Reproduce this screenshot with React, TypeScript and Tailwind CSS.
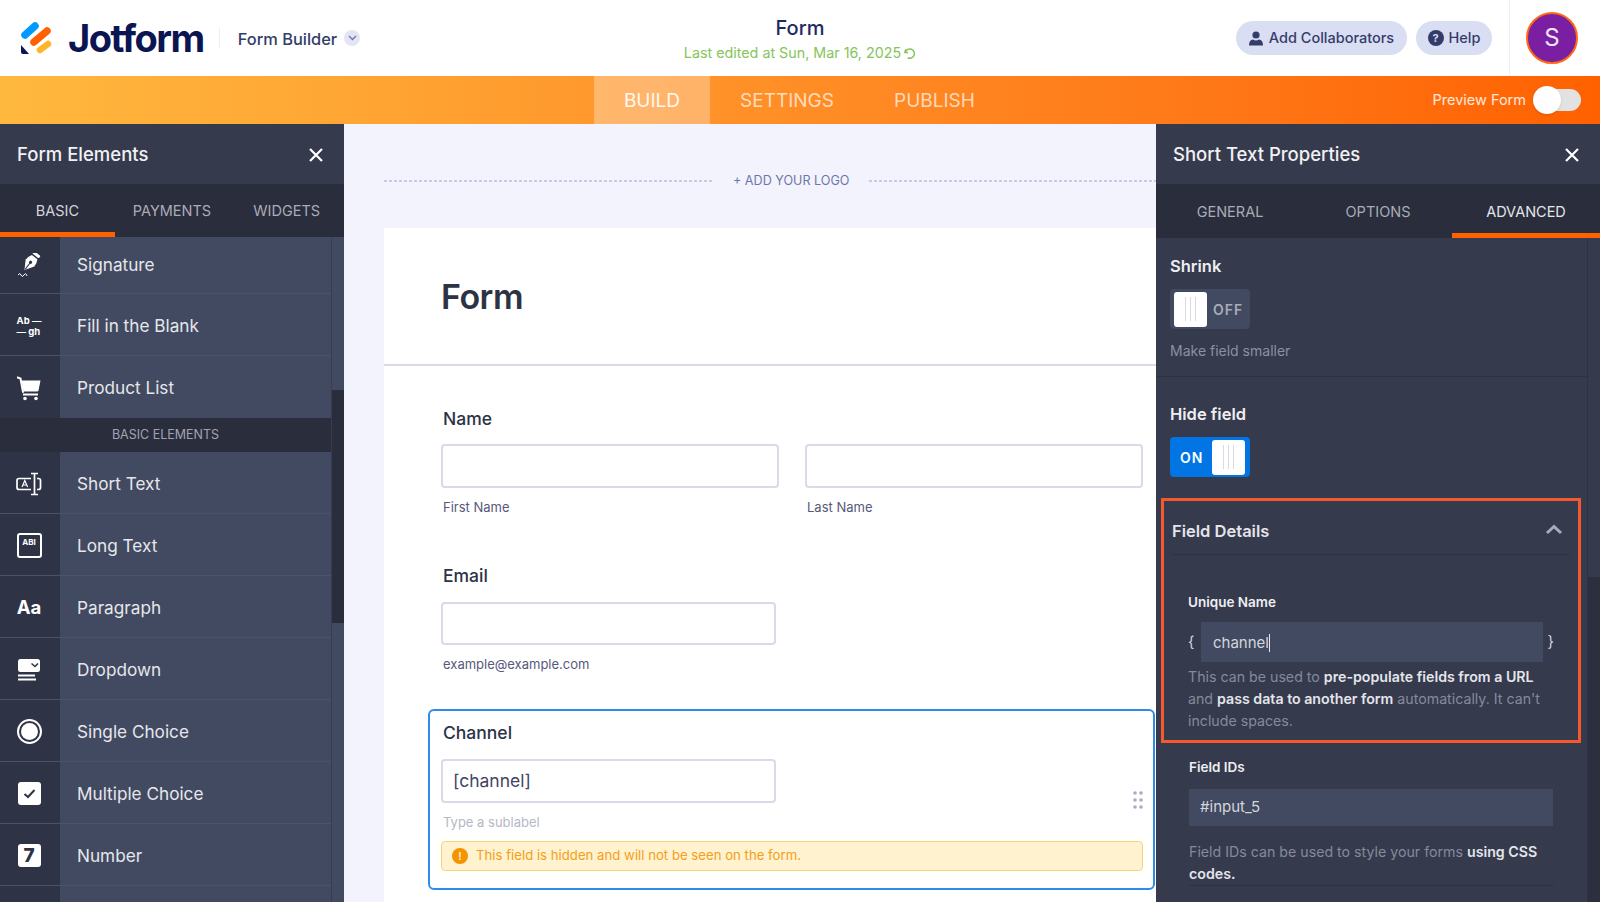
import type { ReactNode } from "react";

const CartIcon = () => (
  <svg width="24" height="25" viewBox="0 0 24 25" fill="none">
    <path d="M0.5 1.5 L3.5 2.5 L6 16" stroke="#fff" strokeWidth="2" strokeLinecap="round" />
    <path d="M4.5 4.5 H23.5 L21.5 14.5 Q21.3 15.5 20 15.5 H6.5 Z" fill="#fff" />
    <path d="M6 18.5 H21" stroke="#fff" strokeWidth="2" />
    <circle cx="8" cy="22.5" r="1.8" fill="#fff" />
    <circle cx="19" cy="22.5" r="1.8" fill="#fff" />
  </svg>
);

const PenIcon = () => (
  <svg width="24" height="24" viewBox="0 0 24 24" fill="none">
    <g transform="rotate(38 13 10)">
      <rect x="9" y="-2" width="8" height="3" rx="0.8" fill="#fff" />
      <path d="M13 19 L7.5 10 Q7.5 5.5 9.5 2.5 H16.5 Q18.5 5.5 18.5 10 Z" fill="#fff" />
      <path d="M13 18 V10" stroke="#2f3346" strokeWidth="1.1" />
      <circle cx="13" cy="9" r="1.6" fill="#2f3346" />
    </g>
    <path d="M1 22 Q3 19 4 22 T7 22 T10 23" stroke="#fff" strokeWidth="1" />
  </svg>
);

const ShortTextIcon = () => (
  <svg width="26" height="24" viewBox="0 0 26 24" fill="none">
    <path d="M15 6.5 H3 Q1 6.5 1 8.5 V15.5 Q1 17.5 3 17.5 H15" stroke="#fff" strokeWidth="1.7" />
    <path d="M21 6.5 H22.5 Q24.5 6.5 24.5 8.5 V15.5 Q24.5 17.5 22.5 17.5 H21" stroke="#fff" strokeWidth="1.7" />
    <path d="M15 1.5 H22 M18.5 1.5 V22.5 M15 22.5 H22" stroke="#fff" strokeWidth="1.7" />
    <path d="M6 15 L8.8 8.5 L11.6 15 M7 13 H10.6" stroke="#fff" strokeWidth="1.2" />
  </svg>
);

const DropdownIcon = () => (
  <svg width="24" height="24" viewBox="0 0 24 24" fill="none">
    <rect x="1" y="1" width="22" height="13" rx="2.5" fill="#fff" />
    <path d="M14.5 5.5 L18 8.5 L21 5.5" stroke="#2f3346" strokeWidth="1.6" />
    <path d="M1 17.5 H18 M1 21.5 H19" stroke="#fff" strokeWidth="2" />
  </svg>
);

const CheckIcon = () => (
  <span className="flex h-[23px] w-[23px] items-center justify-center rounded-[3px] bg-white">
    <svg width="13" height="11" viewBox="0 0 13 11" fill="none">
      <path d="M1.5 6 L5 9 L11.5 2" stroke="#2f3346" strokeWidth="2" />
    </svg>
  </span>
);

type Item = { label: string; icon: ReactNode };

const topItems: Item[] = [
  { label: "Signature", icon: <PenIcon /> },
  {
    label: "Fill in the Blank",
    icon: (
      <span className="flex flex-col text-[9.5px] leading-[11px] font-bold text-white">
        <span>Ab —</span>
        <span>— gh</span>
      </span>
    ),
  },
  { label: "Product List", icon: <CartIcon /> },
];

const basicItems: Item[] = [
  { label: "Short Text", icon: <ShortTextIcon /> },
  {
    label: "Long Text",
    icon: (
      <span className="flex h-[25px] w-[25px] items-start justify-center rounded-[3px] border-2 border-white pt-[3px] text-[8px] leading-[9px] font-bold text-white">
        ABI
      </span>
    ),
  },
  { label: "Paragraph", icon: <span className="text-[18.5px] leading-none font-bold text-white">Aa</span> },
  { label: "Dropdown", icon: <DropdownIcon /> },
  {
    label: "Single Choice",
    icon: (
      <span className="flex h-[25px] w-[25px] items-center justify-center rounded-full border-2 border-white">
        <span className="h-[17px] w-[17px] rounded-full bg-white" />
      </span>
    ),
  },
  { label: "Multiple Choice", icon: <CheckIcon /> },
  {
    label: "Number",
    icon: (
      <span className="flex h-[23px] w-[23px] items-center justify-center rounded-[3px] bg-white text-[19px] leading-none font-extrabold text-[#2f3346]">
        7
      </span>
    ),
  },
  { label: "", icon: null },
];

function ElementRow({ item, h, pad = "pt-[2px]", line = true }: { item: Item; h: string; pad?: string; line?: boolean }) {
  return (
    <div className={`flex ${h} shrink-0 ${line ? "border-b border-[#4a5270]" : ""}`}>
      <div className={`flex w-[60px] items-center justify-center bg-[#2f3346] pr-[2px] ${pad}`}>{item.icon}</div>
      <div className={`flex flex-1 items-center bg-[#414a60] pl-[17px] text-[17.2px] text-[#e6e7ec] ${pad}`}>{item.label}</div>
    </div>
  );
}

const Close = () => (
  <svg width="16" height="16" viewBox="0 0 16 16" fill="none">
    <path d="M2 2 L14 14 M14 2 L2 14" stroke="#fff" strokeWidth="2.2" />
  </svg>
);

const Knob = () => (
  <span className="flex h-[35px] w-[33px] items-center justify-center gap-[4px] rounded-[3px] bg-white">
    <span className="h-[24px] w-px bg-[#d9dae2]" />
    <span className="h-[24px] w-px bg-[#d9dae2]" />
    <span className="h-[24px] w-px bg-[#d9dae2]" />
  </span>
);

function Logo() {
  return (
    <svg width="34" height="36" viewBox="0 0 34 36" fill="none">
      <path d="M6 15 L16 6" stroke="#0099ff" strokeWidth="7.5" strokeLinecap="round" />
      <path d="M15 22 L28 11" stroke="#ff6100" strokeWidth="7.5" strokeLinecap="round" />
      <path d="M21 30 L29 24" stroke="#ffb629" strokeWidth="6.5" strokeLinecap="round" />
      <path d="M2 25 L10 34 H4 Q2 34 2 32 Z" fill="#0a1551" />
    </svg>
  );
}

export default function App() {
  return (
    <div className="flex h-[902px] w-[1600px] flex-col overflow-hidden bg-white font-['Inter',sans-serif]">
      {/* Top bar */}
      <header className="flex h-[76px] shrink-0 items-center">
        <div className="flex w-[600px] items-center pl-[19px]">
          <Logo />
          <span className="ml-[15px] text-[38px] leading-none font-bold tracking-[-1.5px] text-[#0a1551]">Jotform</span>
          <span className="ml-[15px] h-[20px] w-px bg-[#eceef6]" />
          <span className="ml-[18px] pt-[2px] text-[16.4px] font-medium text-[#343c6a]">Form Builder</span>
          <span className="ml-[7px] flex h-[16px] w-[16px] items-center justify-center rounded-full bg-[#e3e5f5]">
            <svg width="9" height="6" viewBox="0 0 9 6" fill="none">
              <path d="M1 1 L4.5 4.5 L8 1" stroke="#6f76a7" strokeWidth="1.4" />
            </svg>
          </span>
        </div>
        <div className="flex w-[400px] flex-col items-center pt-[1px]">
          <span className="text-[20px] leading-[28px] font-medium text-[#1e2a63]">Form</span>
          <span className="mt-[1px] flex items-center gap-[2px] text-[14.3px] leading-[20px] text-[#86c45a]">
            Last edited at Sun, Mar 16, 2025
            <svg width="13" height="13" viewBox="0 0 14 14" fill="none">
              <path d="M3 2.5 L2 6 L5.5 5.8 M2.5 5.5 A5 5 0 1 1 5 11.6" stroke="#86c45a" strokeWidth="1.6" />
            </svg>
          </span>
        </div>
        <div className="flex flex-1 items-center justify-end">
          <button className="flex h-[34px] w-[171px] items-center justify-center gap-[6px] rounded-full bg-[#dadef3] text-[14.5px] font-medium text-[#343c6a]">
            <svg width="14" height="15" viewBox="0 0 14 15" fill="#343c6a">
              <circle cx="7" cy="4" r="3.6" />
              <path d="M0 14.5 Q0 9 4 8.5 Q7 10.5 10 8.5 Q14 9 14 14.5 Z" />
            </svg>
            Add Collaborators
          </button>
          <button className="ml-[9px] flex h-[34px] w-[76px] items-center justify-center gap-[5px] rounded-full bg-[#dadef3] text-[14.5px] font-medium text-[#343c6a]">
            <span className="flex h-[16px] w-[16px] items-center justify-center rounded-full bg-[#343c6a] text-[11px] leading-none font-bold text-[#dadef3]">?</span>
            Help
          </button>
          <span className="ml-[17px] h-[76px] w-px bg-[#eceef3]" />
          <div className="mr-[22px] ml-[16px] flex h-[52px] w-[52px] items-center justify-center rounded-full border-2 border-[#ff6a14] bg-[#7a1fa2] text-[24px] text-[#f3e6f8]">S</div>
        </div>
      </header>

      {/* Build / settings / publish bar */}
      <nav className="flex h-[48px] shrink-0 items-stretch bg-linear-to-r from-[#ffb83e] via-[#ff8d26] via-50% to-[#ff6100] pl-[594px] text-[19px] text-white/70">
        <span className="flex w-[116px] items-center justify-center bg-white/30 pt-[2px] text-white/90">BUILD</span>
        <span className="flex w-[154px] items-center justify-center pt-[2px]">SETTINGS</span>
        <span className="flex w-[141px] items-center justify-center pt-[2px]">PUBLISH</span>
        <div className="ml-auto flex items-center pr-[19px]">
          <span className="text-[14.5px] text-white/85">Preview Form</span>
          <div className="relative ml-[9px] h-[22px] w-[46px] rounded-full bg-[#e2e2e2]">
            <span className="absolute top-[-3px] left-[-2px] h-[28px] w-[28px] rounded-full bg-white shadow" />
          </div>
        </div>
      </nav>

      <main className="flex min-h-0 flex-1">
        {/* Form elements panel */}
        <aside className="flex w-[344px] shrink-0 flex-col overflow-hidden bg-[#353a4d]">
          <div className="flex h-[60px] shrink-0 items-center justify-between pt-[1px] pr-[20px] pl-[17px] text-[18.5px] font-medium text-[#f1f1f4]">
            Form Elements
            <Close />
          </div>
          <div className="grid h-[53px] shrink-0 grid-cols-3 bg-[#2a2d3c] text-[14.5px] text-[#a9acb8]">
            <span className="flex items-center justify-center border-b-[5px] border-[#ff6100] pt-[5px] text-[#d5d6dc]">BASIC</span>
            <span className="flex items-center justify-center">PAYMENTS</span>
            <span className="flex items-center justify-center">WIDGETS</span>
          </div>
          <div className="flex min-h-0 flex-1">
            <div className="flex w-[331px] flex-col">
              <ElementRow item={topItems[0]} h="h-[57px]" pad="" />
              <ElementRow item={topItems[1]} h="h-[62px]" />
              <ElementRow item={topItems[2]} h="h-[62px]" line={false} />
              <div className="flex h-[34px] shrink-0 items-center justify-center bg-[#2a2d3c] pt-[1px] text-[12.5px] text-[#a0a4b2]">BASIC ELEMENTS</div>
              {basicItems.map((item, i) => (
                <ElementRow key={i} item={item} h="h-[62px]" />
              ))}
            </div>
            <div className="flex w-[13px] flex-col border-l border-[#373c50] bg-[#414a60]">
              <div className="h-[153px] shrink-0" />
              <div className="h-[233px] shrink-0 bg-[#2a2d3c]" />
            </div>
          </div>
        </aside>

        {/* Canvas */}
        <section className="w-[812px] shrink-0 overflow-hidden bg-[#f3f3fe] pl-[40px]">
          <div className="flex h-[104px] items-center pt-[10px]">
            <span className="h-[2px] w-[330px] bg-[repeating-linear-gradient(90deg,#c8cbe8_0_3px,transparent_3px_5px)]" />
            <span className="ml-[19px] w-[117px] text-[12.6px] whitespace-nowrap text-[#6f76a7]">+ ADD YOUR LOGO</span>
            <span className="ml-[19px] h-[2px] flex-1 bg-[repeating-linear-gradient(90deg,#c8cbe8_0_3px,transparent_3px_5px)]" />
          </div>
          <div className="h-[700px] bg-white text-[#2c3345]">
            <div className="flex h-[138px] items-center border-b-2 border-[#d8dae5] pl-[57px] text-[34px] font-semibold tracking-[-0.5px]">Form</div>
            <div className="pt-[41px] pl-[44px]">
              <div className="pl-[13px]">
                <div className="pl-[2px] text-[17.5px] leading-[24px] font-medium">Name</div>
                <div className="mt-[13px] flex gap-[26px]">
                  <div className="w-[338px]">
                    <div className="h-[44px] rounded-[4px] border-2 border-[#d8dae9] bg-white" />
                    <div className="mt-[10px] pl-[2px] text-[13px] leading-[18px] text-[#57597a]">First Name</div>
                  </div>
                  <div className="w-[338px]">
                    <div className="h-[44px] rounded-[4px] border-2 border-[#d8dae9] bg-white" />
                    <div className="mt-[10px] pl-[2px] text-[13px] leading-[18px] text-[#57597a]">Last Name</div>
                  </div>
                </div>
                <div className="mt-[48px] pl-[2px] text-[17.5px] leading-[24px] font-medium">Email</div>
                <div className="mt-[14px] h-[43px] w-[335px] rounded-[4px] border-2 border-[#d8dae9] bg-white" />
                <div className="mt-[10px] pl-[2px] text-[13px] leading-[18px] text-[#57597a]">example@example.com</div>
              </div>
              <div className="relative mt-[36px] h-[181px] w-[727px] rounded-[6px] border-2 border-[#2f8be6] pt-[10px] pl-[11px]">
                <div className="pl-[2px] text-[17.5px] leading-[24px] font-medium">Channel</div>
                <div className="mt-[14px] flex h-[44px] w-[335px] items-center rounded-[4px] border-2 border-[#d8dae9] pl-[10px] text-[17.5px] text-[#3f4563]">[channel]</div>
                <div className="mt-[10px] pl-[2px] text-[13px] leading-[18px] text-[#b5b8c6]">Type a sublabel</div>
                <div className="mt-[10px] flex h-[30px] w-[702px] items-center gap-[8px] rounded-[4px] border border-[#f0d878] bg-[#fef2cf] pl-[10px] text-[13.2px] text-[#f59e1b]">
                  <span className="flex h-[16px] w-[16px] items-center justify-center rounded-full bg-[#f59300] text-[10px] leading-none font-bold text-[#fef2cf]">!</span>
                  This field is hidden and will not be seen on the form.
                </div>
                {/* drag handle */}
                <svg className="absolute top-[80px] right-[10px]" width="10" height="18" viewBox="0 0 10 18" fill="#a7abc4">
                  <circle cx="2" cy="2" r="1.8" />
                  <circle cx="8" cy="2" r="1.8" />
                  <circle cx="2" cy="9" r="1.8" />
                  <circle cx="8" cy="9" r="1.8" />
                  <circle cx="2" cy="16" r="1.8" />
                  <circle cx="8" cy="16" r="1.8" />
                </svg>
              </div>
            </div>
          </div>
        </section>

        {/* Properties panel */}
        <aside className="flex flex-1 flex-col overflow-hidden bg-[#353a4d]">
          <div className="flex h-[60px] shrink-0 items-center justify-between pt-[1px] pr-[20px] pl-[17px] text-[18.5px] font-medium text-[#f1f1f4]">
            Short Text Properties
            <Close />
          </div>
          <div className="grid h-[54px] shrink-0 grid-cols-3 bg-[#2a2d3c] pt-[2px] text-[14.5px] text-[#a9acb8]">
            <span className="flex items-center justify-center">GENERAL</span>
            <span className="flex items-center justify-center">OPTIONS</span>
            <span className="flex items-center justify-center border-b-[5px] border-[#ff6100] pt-[5px] text-[#e4e5ea]">ADVANCED</span>
          </div>
          <div className="flex min-h-0 flex-1">
            <div className="w-[431px] shrink-0">
              <div className="border-b border-[#2e3243] px-[14px] pt-[16px] pb-[16px]">
                <div className="text-[16.5px] leading-[24px] font-semibold text-[#eeeef2]">Shrink</div>
                <div className="mt-[11px] flex h-[40px] w-[80px] items-center rounded-[4px] bg-[#414a60] pl-[4px]">
                  <Knob />
                  <span className="ml-[6px] text-[14px] font-semibold tracking-[1px] text-[#a9acb8]">OFF</span>
                </div>
                <div className="mt-[13px] text-[14px] leading-[18px] text-[#8c90a1]">Make field smaller</div>
              </div>
              <div className="px-[14px] pt-[25px]">
                <div className="text-[16.5px] leading-[24px] font-semibold text-[#eeeef2]">Hide field</div>
                <div className="mt-[11px] flex h-[40px] w-[80px] items-center rounded-[4px] bg-[#0075e3] pl-[10px]">
                  <span className="text-[14px] font-semibold tracking-[1px] text-white">ON</span>
                  <span className="ml-[9px]">
                    <Knob />
                  </span>
                </div>
              </div>
              <div className="mt-[21px] ml-[5px] h-[245px] w-[420px] border-[3px] border-[#f4582c]">
                <div className="mx-[8px] flex h-[54px] items-center justify-between border-b border-[#2e3243] pt-[7px]">
                  <span className="text-[16.5px] font-semibold text-[#e4e5ea]">Field Details</span>
                  <svg className="mr-[7px] mb-[3px]" width="18" height="11" viewBox="0 0 18 11" fill="none">
                    <path d="M2 9 L9 2.5 L16 9" stroke="#a9acb8" strokeWidth="3" />
                  </svg>
                </div>
                <div className="px-[24px]">
                  <div className="mt-[37px] text-[13.5px] leading-[20px] font-semibold text-[#eeeef2]">Unique Name</div>
                  <div className="mt-[10px] flex items-center text-[15px] text-[#d5d6dc]">
                    <span className="w-[13px]">{"{"}</span>
                    <div className="flex h-[40px] w-[342px] items-center bg-[#414a60] pt-[2px] pl-[12px]">
                      channel
                      <span className="h-[18px] w-px bg-[#e6e7ec]" />
                    </div>
                    <span className="ml-[5px]">{"}"}</span>
                  </div>
                  <p className="mt-[4px] w-[362px] text-[14.2px] leading-[22px] text-[#858a9b]">
                    This can be used to <b className="font-semibold text-[#e4e5ea]">pre-populate fields from a URL</b>
                    <br />
                    and <b className="font-semibold text-[#e4e5ea]">pass data to another form</b> automatically. It can't
                    <br />
                    include spaces.
                  </p>
                </div>
              </div>
              <div className="mx-[33px] w-[365px] border-b border-[#2e3243]">
                <div className="mt-[14px] text-[13.5px] leading-[20px] font-semibold text-[#eeeef2]">Field IDs</div>
                <div className="mt-[12px] flex h-[37px] w-[364px] items-center bg-[#414a60] pl-[11px] text-[15px] text-[#d5d6dc]">#input_5</div>
                <p className="mt-[15px] text-[14.2px] leading-[22px] text-[#858a9b]">
                  Field IDs can be used to style your forms <b className="font-semibold text-[#e4e5ea]">using CSS</b>
                  <br />
                  <b className="font-semibold text-[#e4e5ea]">codes.</b>
                </p>
              </div>
            </div>
            <div className="flex w-[13px] flex-col border-l border-[#2e3243]">
              <div className="h-[339px] shrink-0" />
              <div className="flex-1 bg-[#2c2f3e]" />
            </div>
          </div>
        </aside>
      </main>
    </div>
  );
}
